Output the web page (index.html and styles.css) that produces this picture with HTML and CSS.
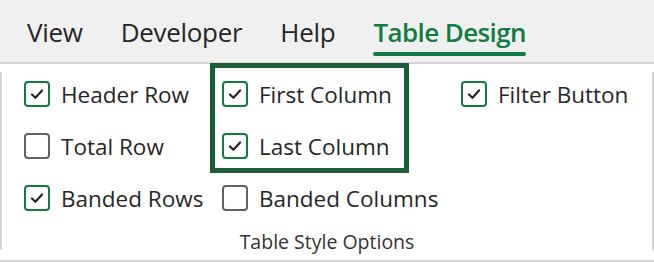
FILE: index.html
```html
<!DOCTYPE html>
<html lang="en">
<head>
<meta charset="UTF-8">
<meta name="viewport" content="width=device-width, initial-scale=1.0">
<title>Table Design</title>
<link rel="stylesheet" href="styles.css">
</head>
<body>

<div class="tabs">
    <span class="tab">View</span>
    <span class="tab">Developer</span>
    <span class="tab">Help</span>
    <span class="tab active">Table Design</span>
</div>

<div class="ribbon">
    <div class="group">
        <div class="options">
            <div class="col">
                <label class="opt"><span class="box on"><svg viewBox="0 0 24 24"><path d="M6.5 12.5l3.8 3.6 7.2-8"/></svg></span>Header Row</label>
                <label class="opt"><span class="box"></span>Total Row</label>
                <label class="opt"><span class="box on"><svg viewBox="0 0 24 24"><path d="M6.5 12.5l3.8 3.6 7.2-8"/></svg></span>Banded Rows</label>
            </div>
            <div class="col">
                <div class="highlight">
                    <label class="opt"><span class="box on"><svg viewBox="0 0 24 24"><path d="M6.5 12.5l3.8 3.6 7.2-8"/></svg></span>First Column</label>
                    <label class="opt"><span class="box on"><svg viewBox="0 0 24 24"><path d="M6.5 12.5l3.8 3.6 7.2-8"/></svg></span>Last Column</label>
                </div>
                <label class="opt"><span class="box"></span>Banded Columns</label>
            </div>
            <div class="col">
                <label class="opt"><span class="box on"><svg viewBox="0 0 24 24"><path d="M6.5 12.5l3.8 3.6 7.2-8"/></svg></span>Filter Button</label>
            </div>
        </div>
        <div class="group-name">Table Style Options</div>
    </div>
</div>

</body>
</html>
```

FILE: styles.css
```css
body {
    margin: 0;
    width: 654px;
    height: 262px;
    overflow: hidden;
    background-color: #ffffff;
    font-family: "Open Sans", "Noto Sans", sans-serif;
    color: #262626;
}

.tabs {
    display: flex;
    height: 64px;
    padding-left: 27px;
    gap: 38px;
    background-color: #f0f0f0;
    border-bottom: 2px solid #d6d6d6;
    box-sizing: border-box;
}

.tab {
    position: relative;
    font-size: 26px;
    line-height: 28px;
    padding-top: 18px;
    color: #262626;
    letter-spacing: -0.3px;
}

.tab.active {
    color: #107c41;
    font-weight: 600;
    letter-spacing: -0.6px;
}

.tab.active::after {
    content: "";
    position: absolute;
    left: 0;
    right: 0;
    top: 52px;
    height: 4px;
    border-radius: 2px;
    background-color: #107c41;
}

.ribbon {
    padding-top: 8px;
    padding-bottom: 10px;
    border-bottom: 2px solid #d6d6d6;
}

.group {
    display: flex;
    flex-direction: column;
    height: 178px;
    border-left: 2px solid #d6d6d6;
    border-right: 2px solid #d6d6d6;
    box-sizing: border-box;
}

.options {
    display: grid;
    grid-template-columns: 198px 239px auto;
    padding-left: 22px;
}

.col {
    display: flex;
    flex-direction: column;
    gap: 8px;
}

.opt {
    display: flex;
    align-items: center;
    gap: 11px;
    height: 44px;
    font-size: 22.5px;
    color: #262626;
    white-space: nowrap;
}

.box {
    display: flex;
    align-items: center;
    justify-content: center;
    width: 26px;
    height: 26px;
    box-sizing: border-box;
    border: 2px solid #616161;
    border-radius: 4px;
    flex-shrink: 0;
}

.box.on {
    border-color: #107c41;
}

.box svg {
    width: 24px;
    height: 24px;
    fill: none;
    stroke: #242424;
    stroke-width: 2.4;
    stroke-linecap: round;
    stroke-linejoin: round;
}

.highlight {
    display: flex;
    flex-direction: column;
    gap: 8px;
    width: 199px;
    box-sizing: border-box;
    margin: -9px 0 -5px -12px;
    padding: 4px 0 0 7px;
    border: 5px solid #1b5e38;
}

.group-name {
    margin-top: auto;
    margin-bottom: -2px;
    text-align: center;
    font-size: 19.5px;
    line-height: 20px;
    color: #333333;
}
```
